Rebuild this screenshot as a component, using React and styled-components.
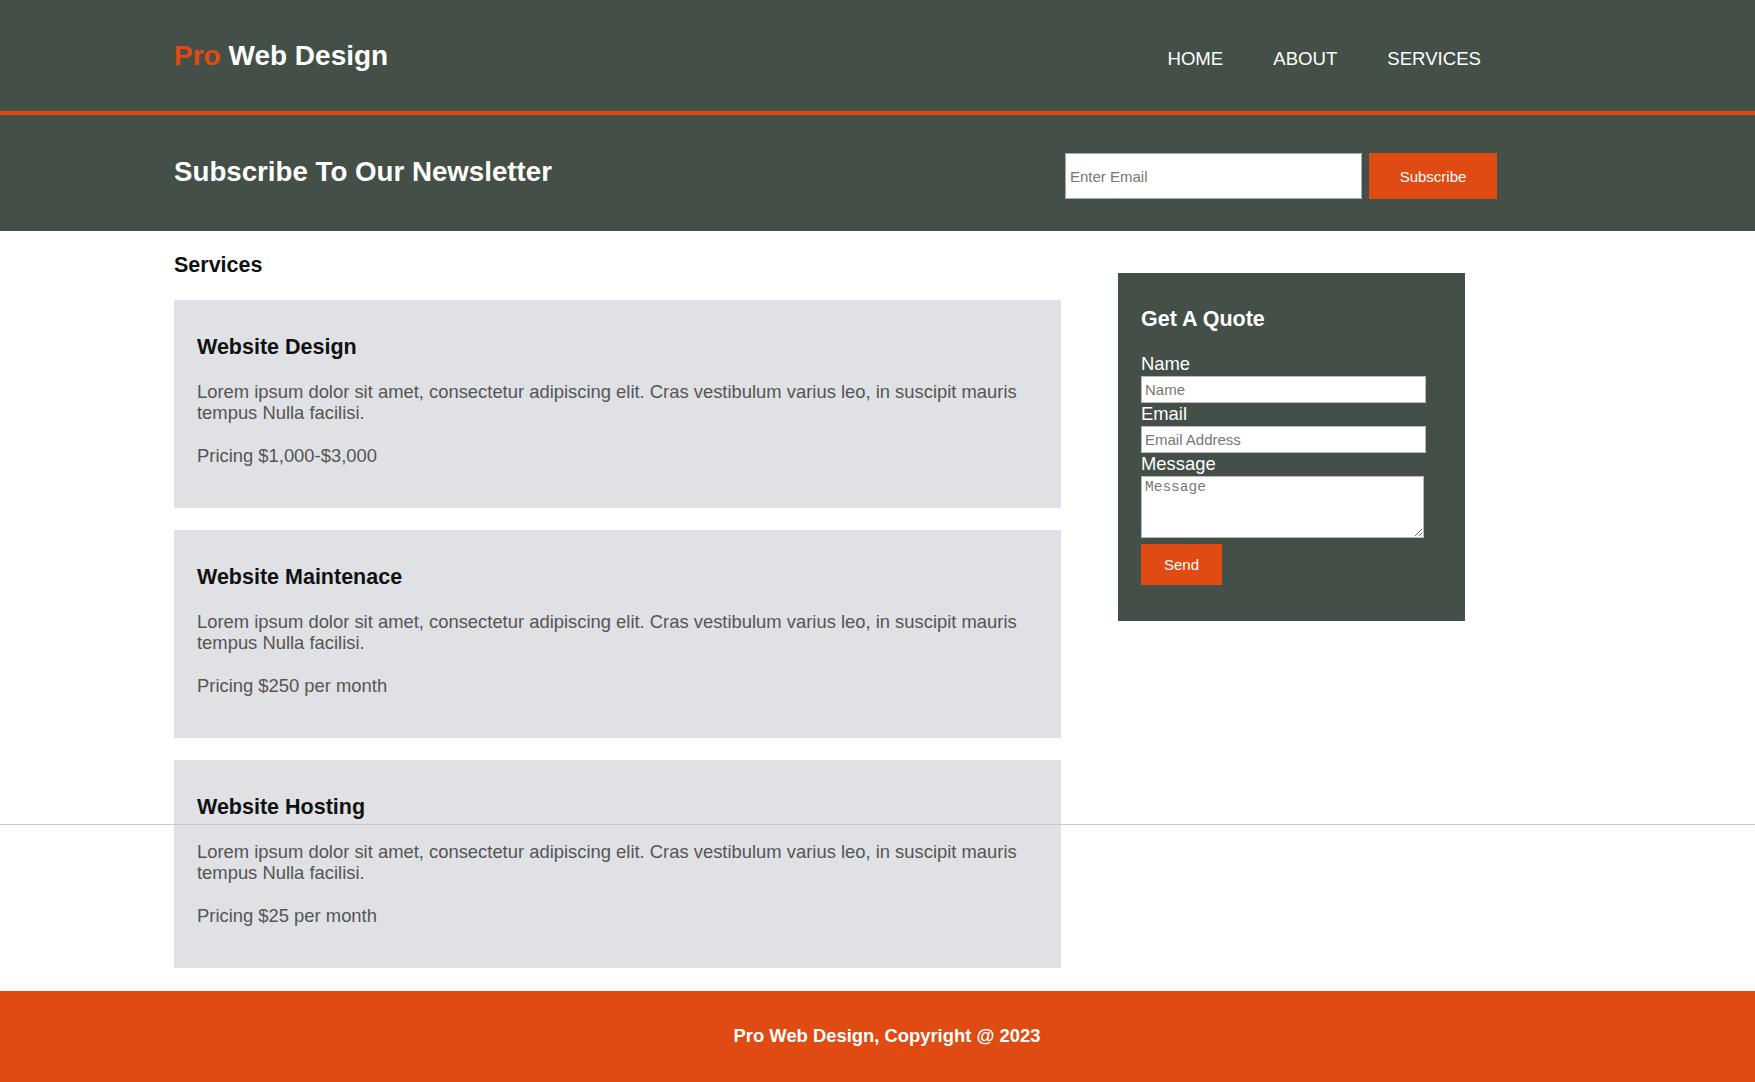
import React from 'react'
import styled, { createGlobalStyle } from 'styled-components'

const dark = '#434f47'
const orange = '#e04a13'

const GlobalStyle = createGlobalStyle`
  * { box-sizing: border-box; }
  html, body {
    margin: 0;
    padding: 0;
    font-family: "Liberation Sans", Arial, sans-serif;
    font-size: 18.4px;
    background: #fff;
    overflow: hidden;
  }
`

const Header = styled.header`
  display: flex;
  justify-content: space-between;
  align-items: center;
  height: 115px;
  padding: 0 274px 0 174px;
  background-color: ${dark};
  border-bottom: 4px solid ${orange};
`

const Logo = styled.h1`
  margin: 1px 0 0;
  font-size: 28px;
  font-weight: bold;
  color: #fff;

  span {
    color: ${orange};
  }
`

const Nav = styled.nav`
  display: flex;
  gap: 50px;
  margin-top: 7px;

  a {
    color: #fff;
    text-decoration: none;
    font-size: 18.6px;
    text-transform: uppercase;
  }
`

const Newsletter = styled.section`
  display: flex;
  justify-content: space-between;
  align-items: center;
  height: 116px;
  padding: 0 258px 0 174px;
  background-color: ${dark};

  h2 {
    margin: 0 0 3px;
    font-size: 27.7px;
    color: #fff;
  }

  form {
    display: flex;
    gap: 7px;
    margin-top: 6px;
  }
`

const EmailInput = styled.input`
  width: 297px;
  height: 46px;
  padding: 0 4px;
  border: 1px solid #a8a8a8;
  font-family: "Liberation Sans", Arial, sans-serif;
  font-size: 15px;

  &::placeholder {
    color: #777;
  }
`

const OrangeButton = styled.button`
  width: ${(p) => p.width};
  height: ${(p) => p.height};
  border: 0;
  background-color: ${orange};
  color: #fff;
  font-family: "Liberation Sans", Arial, sans-serif;
  font-size: 15px;
  cursor: pointer;
`

const Main = styled.main`
  position: relative;
  display: flex;
  align-items: flex-start;
  gap: 57px;
  padding: 0 0 23px 174px;
`

/* thin grey rule that runs across the page, over the last card */
const Rule = styled.div`
  position: absolute;
  left: 0;
  right: 0;
  top: 593px;
  height: 1px;
  background-color: #c9c9c9;
`

const Services = styled.section`
  width: 887px;

  h3 {
    margin: 22px 0 22px;
    font-size: 21.5px;
    color: #111;
  }
`

const CardList = styled.div`
  display: flex;
  flex-direction: column;
  gap: 22px;
`

const Card = styled.article`
  padding: 35px 23px 20px;
  background-color: #dfe1e5;

  h3 {
    margin: 0 0 21px;
    font-size: 21.5px;
    color: #111;
  }

  p {
    margin: 0 0 22px;
    font-size: 18.4px;
    line-height: 21px;
    color: #555;
  }
`

const Quote = styled.aside`
  width: 347px;
  margin-top: 42px;
  padding: 34px 23px 36px;
  background-color: ${dark};
  color: #fff;

  h3 {
    margin: 0 0 21px;
    font-size: 21.5px;
  }

  form {
    display: flex;
    flex-direction: column;
    align-items: flex-start;
  }

  label {
    display: block;
    font-size: 18.4px;
    line-height: 21px;
    margin-bottom: 2px;
  }
`

const Field = styled.input`
  width: 285px;
  height: 27px;
  padding: 0 3px;
  border: 1px solid #bbb;
  font-family: "Liberation Sans", Arial, sans-serif;
  font-size: 15px;

  &::placeholder {
    color: #777;
  }
`

const MessageBox = styled.textarea`
  width: 283px;
  height: 62px;
  padding: 2px 3px;
  border: 1px solid #bbb;
  font-family: "Liberation Mono", monospace;
  font-size: 14.5px;
  resize: vertical;
  margin-bottom: 6px;

  &::placeholder {
    color: #777;
  }
`

const Footer = styled.footer`
  height: 96px;
  padding: 34px 0 0 19px;
  background-color: ${orange};
  text-align: center;
  color: #fff;
  font-weight: bold;
  font-size: 18.4px;
`

const services = [
  { title: 'Website Design', price: 'Pricing $1,000-$3,000' },
  { title: 'Website Maintenace', price: 'Pricing $250 per month' },
  { title: 'Website Hosting', price: 'Pricing $25 per month' },
]

const lorem =
  'Lorem ipsum dolor sit amet, consectetur adipiscing elit. Cras vestibulum varius leo, in suscipit mauris tempus Nulla facilisi.'

const App = () => {
  return (
    <>
      <GlobalStyle />
      <Header>
        <Logo>
          <span>Pro</span> Web Design
        </Logo>
        <Nav>
          <a href="#">Home</a>
          <a href="#">About</a>
          <a href="#">Services</a>
        </Nav>
      </Header>

      <Newsletter>
        <h2>Subscribe To Our Newsletter</h2>
        <form onSubmit={(e) => e.preventDefault()}>
          <EmailInput type="email" placeholder="Enter Email" />
          <OrangeButton width="128px" height="46px">Subscribe</OrangeButton>
        </form>
      </Newsletter>

      <Main>
        <Services>
          <h3>Services</h3>
          <CardList>
            {services.map((s) => (
              <Card key={s.title}>
                <h3>{s.title}</h3>
                <p>{lorem}</p>
                <p>{s.price}</p>
              </Card>
            ))}
          </CardList>
        </Services>

        <Quote>
          <h3>Get A Quote</h3>
          <form onSubmit={(e) => e.preventDefault()}>
            <label htmlFor="name">Name</label>
            <Field id="name" type="text" placeholder="Name" />
            <label htmlFor="email">Email</label>
            <Field id="email" type="email" placeholder="Email Address" />
            <label htmlFor="message">Message</label>
            <MessageBox id="message" placeholder="Message" />
            <OrangeButton width="81px" height="41px">Send</OrangeButton>
          </form>
        </Quote>
        <Rule />
      </Main>

      <Footer>Pro Web Design, Copyright @ 2023</Footer>
    </>
  )
}

export default App
